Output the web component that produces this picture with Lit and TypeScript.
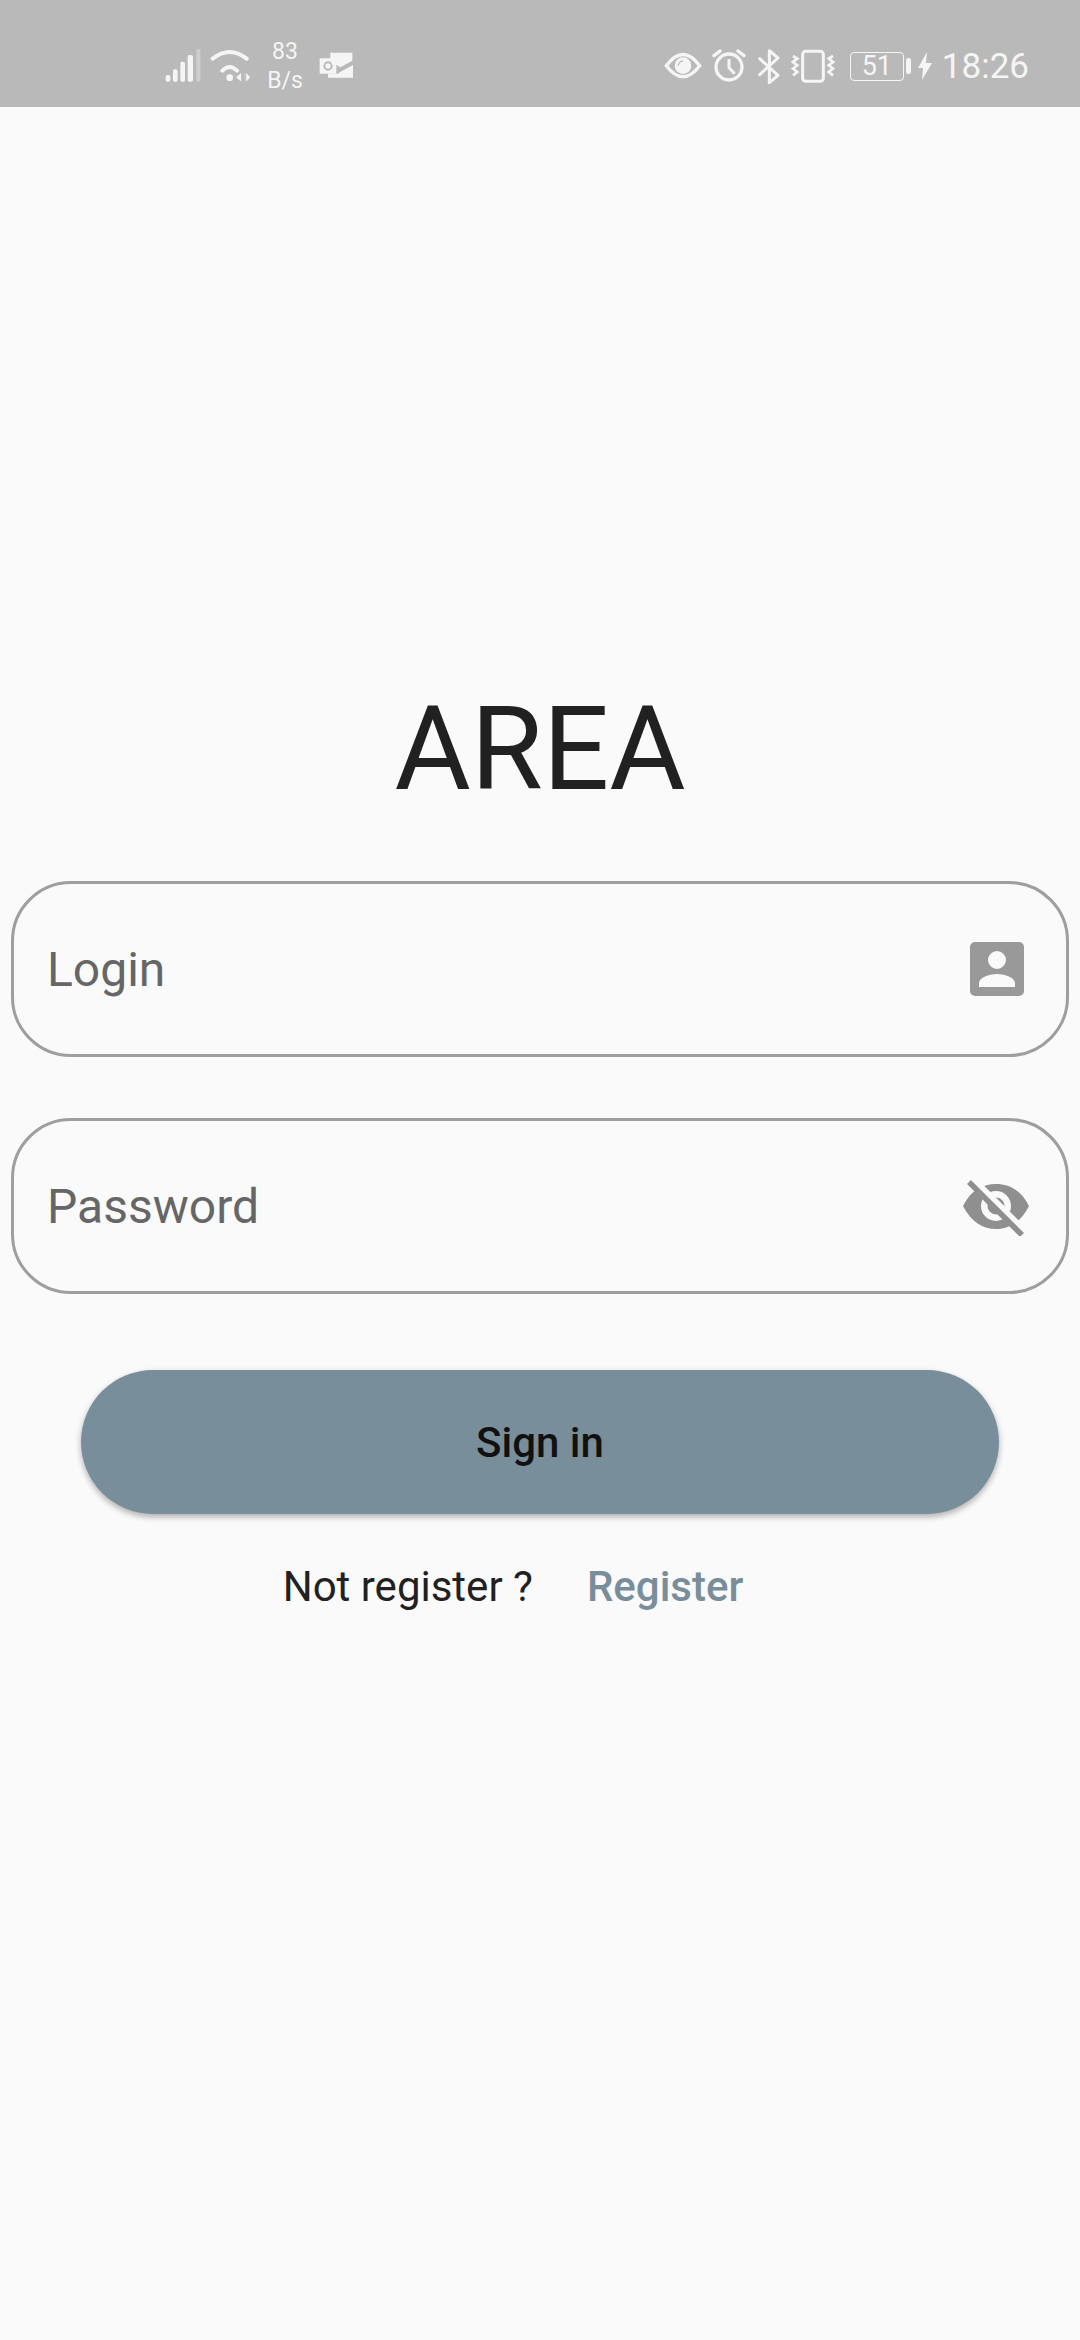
import { LitElement, css, html } from 'lit'
import { customElement } from 'lit/decorators.js'

@customElement('app-root')
export class AppRoot extends LitElement {
  static styles = css`
    :host {
      display: block;
      width: 1080px;
      height: 2340px;
      background: #fafafa;
      font-family: Roboto, "Liberation Sans", sans-serif;
      overflow: hidden;
    }
    svg { display: block; flex: none; }
    .status {
      height: 107px;
      box-sizing: border-box;
      background: #b9b9b9;
      color: #f5f5f5;
      display: flex;
      justify-content: space-between;
      align-items: center;
      padding: 25px 51px 0 165px;
    }
    .status-left, .status-right { display: flex; align-items: center; }
    .speed {
      width: 48px;
      margin: 0 10px;
      font-size: 23px;
      line-height: 29px;
      text-align: center;
    }
    .battery {
      width: 54px;
      height: 29px;
      box-sizing: border-box;
      border: 1.5px solid #f5f5f5;
      border-radius: 4px;
      font-size: 27px;
      line-height: 26px;
      text-align: center;
    }
    .time { font-size: 35px; line-height: 44px; margin: 2px 0 0 10px; }
    .main {
      display: flex;
      flex-direction: column;
      align-items: center;
      padding: 577px 11px 0;
    }
    .title {
      font-size: 117px;
      line-height: 130px;
      color: #212121;
      margin-bottom: 67px;
    }
    .field {
      align-self: stretch;
      height: 176px;
      box-sizing: border-box;
      border: 3px solid #9e9e9e;
      border-radius: 60px;
      display: flex;
      align-items: center;
      justify-content: space-between;
      padding: 0 42px 0 33px;
      font-size: 48px;
      color: #666;
      margin-bottom: 61px;
    }
    .field-password { padding-right: 37px; }
    .button {
      width: 918px;
      height: 144px;
      margin-top: 15px;
      border-radius: 72px;
      background: #788e9a;
      box-shadow: 0 3px 6px rgba(0, 0, 0, 0.3);
      display: flex;
      align-items: center;
      justify-content: center;
      font-size: 42px;
      font-weight: 500;
      color: #111;
    }
    .register {
      display: flex;
      gap: 54px;
      margin-top: 45px;
      padding-right: 54px;
      font-size: 42px;
      line-height: 56px;
      color: #212121;
    }
    .link { color: #788e9a; font-weight: 500; }
  `

  render () {
    return html`
      <div class="status">
        <div class="status-left">
          <svg width="36" height="36" viewBox="76 84 108 108" fill="#f5f5f5">
            <rect x="78" y="165" width="14" height="20" rx="6"/>
            <rect x="100" y="148" width="14" height="37" rx="5"/>
            <rect x="122" y="125" width="14" height="60" rx="5"/>
            <rect x="144" y="105" width="16" height="80" rx="5"/>
            <rect x="170" y="87" width="12" height="98" rx="5" opacity="0.35"/>
          </svg>
          <svg width="42" height="36" viewBox="208 84 126 108" style="margin-left:8px">
            <path d="M219 116Q270 76 321 116M248 152Q270 130 292 152" fill="none" stroke="#f5f5f5" stroke-width="12" stroke-linecap="round"/>
            <circle cx="270" cy="173" r="10" fill="#f5f5f5"/>
            <path d="M304 160v24l-14-12zM316 160v24M320 160l11 12-11 12z" fill="#f5f5f5" stroke="#f5f5f5" stroke-width="1"/>
          </svg>
          <div class="speed">83<br>B/s</div>
          <svg width="35" height="28" viewBox="538 96 105 84">
            <path d="M572 98h66v24l-36 20-30-18zM640 135v38h-75v-12h30l8-6z" fill="#f5f5f5"/>
            <rect x="540" y="115" width="50" height="46" rx="3" fill="#f5f5f5"/>
            <circle cx="565" cy="138" r="11" fill="none" stroke="#b9b9b9" stroke-width="6"/>
          </svg>
        </div>
        <div class="status-right">
          <svg width="38" height="30" viewBox="45 98 114 90">
            <path d="M52 142Q102 75 152 142Q102 208 52 142Z" fill="none" stroke="#f5f5f5" stroke-width="10"/>
            <circle cx="102" cy="142" r="25" fill="#f5f5f5"/>
            <path d="M88 142a14 14 0 0 1 14-14" fill="none" stroke="#b9b9b9" stroke-width="4"/>
          </svg>
          <svg width="34" height="34" viewBox="190 88 102 102" style="margin-left:10px">
            <circle cx="241" cy="142" r="39" fill="none" stroke="#f5f5f5" stroke-width="10"/>
            <path d="M241 118v26l17 18" fill="none" stroke="#f5f5f5" stroke-width="9"/>
            <path d="M196 108l18-14M286 108l-18-14" stroke="#f5f5f5" stroke-width="10" stroke-linecap="round"/>
          </svg>
          <svg width="24" height="36" viewBox="324 84 72 108" style="margin-left:11px">
            <path d="M332 116l55 50-26 22V92l26 22-55 50" fill="none" stroke="#f5f5f5" stroke-width="9" stroke-linejoin="round" stroke-linecap="round"/>
          </svg>
          <svg width="44" height="36" viewBox="424 84 132 108" style="margin-left:10px">
            <rect x="459" y="94" width="62" height="90" rx="9" fill="none" stroke="#f5f5f5" stroke-width="9"/>
            <path d="M430 108l13 8-13 10 13 10-13 10 13 10-13 10M550 108l-13 8 13 10-13 10 13 10-13 10 13 10" fill="none" stroke="#f5f5f5" stroke-width="8"/>
          </svg>
          <div class="battery" style="margin-left:15px">51</div>
          <svg width="5" height="16" viewBox="0 0 5 16" style="margin-left:2px"><rect width="5" height="16" rx="2" fill="#f5f5f5"/></svg>
          <svg width="14" height="28" viewBox="0 0 14 28" style="margin-left:7px"><path d="M9 0L0 16h5L4 28 14 11H8z" fill="#f5f5f5"/></svg>
          <div class="time">18:26</div>
        </div>
      </div>
      <div class="main">
        <div class="title">AREA</div>
        <div class="field">
          <span>Login</span>
          <svg width="54" height="54" viewBox="0 0 54 54">
            <path fill="#999" fill-rule="evenodd" d="M5 0h44a5 5 0 0 1 5 5v44a5 5 0 0 1-5 5H5a5 5 0 0 1-5-5V5a5 5 0 0 1 5-5ZM27 9a9 9 0 1 0 0 18a9 9 0 0 0 0-18ZM9 45h36v-4c0-6-12-9-18-9s-18 3-18 9Z"/>
          </svg>
        </div>
        <div class="field field-password">
          <span>Password</span>
          <svg width="66" height="60" viewBox="0 0 66 60">
            <path fill="#8f8f8f" fill-rule="evenodd" d="M0 30C8 14 20 8 33 8s25 6 33 22C58 46 46 53 33 53S8 46 0 30ZM33 15a15 15 0 1 0 0 30a15 15 0 0 0 0-30Z"/>
            <circle cx="33" cy="30" r="8.5" fill="#8f8f8f"/>
            <path d="M9 4L62 57" stroke="#fafafa" stroke-width="9"/>
            <path d="M6 6L59 59" stroke="#8f8f8f" stroke-width="5.5"/>
          </svg>
        </div>
        <div class="button">Sign in</div>
        <div class="register"><span>Not register ?</span><span class="link">Register</span></div>
      </div>
    `
  }
}
